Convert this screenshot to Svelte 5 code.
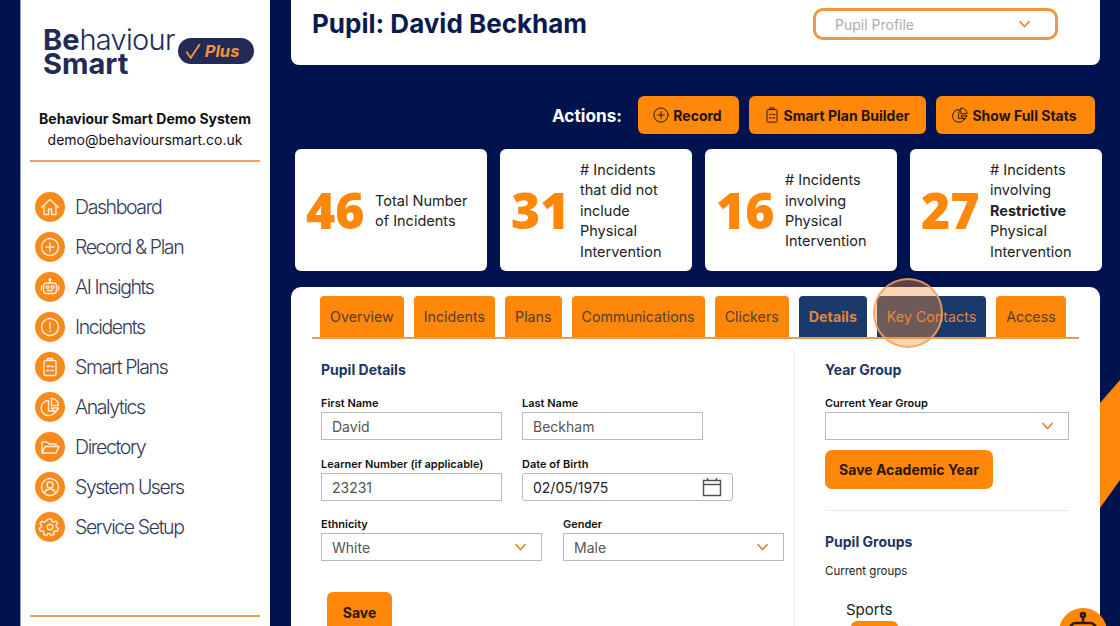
<script>
	const nav = [
		{ label: 'Dashboard', icon: 'home' },
		{ label: 'Record & Plan', icon: 'plus' },
		{ label: 'AI Insights', icon: 'robot' },
		{ label: 'Incidents', icon: 'alert' },
		{ label: 'Smart Plans', icon: 'clip' },
		{ label: 'Analytics', icon: 'pie' },
		{ label: 'Directory', icon: 'folder' },
		{ label: 'System Users', icon: 'user' },
		{ label: 'Service Setup', icon: 'gear' }
	];
	const stats = [
		{ n: 46, lines: ['Total Number', 'of Incidents'] },
		{ n: 31, lines: ['# Incidents', 'that did not', 'include', 'Physical', 'Intervention'] },
		{ n: 16, lines: ['# Incidents', 'involving', 'Physical', 'Intervention'] },
		{ n: 27, lines: ['# Incidents', 'involving', '*Restrictive', 'Physical', 'Intervention'] }
	];
	const tabs = ['Overview', 'Incidents', 'Plans', 'Communications', 'Clickers', 'Details', 'Key Contacts', 'Access'];
</script>

{#snippet icon(name)}
	{#if name === 'home'}
		<path d="M3.500 12.500 12 4.500l8.500 8M6 10.500V19.500h4.500v-5.500h3v5.500H18v-9" />
	{:else if name === 'plus'}
		<circle cx="12" cy="12" r="8.500" /><path d="M12 8v8M8 12h8" />
	{:else if name === 'robot'}
		<rect x="5.500" y="8" width="13" height="10.500" rx="3" /><circle cx="9.500" cy="12" r="1.400" /><circle cx="14.500" cy="12" r="1.400" /><path d="M9.500 15.500h5M12 8V5M3.500 11v4M20.500 11v4" /><circle cx="12" cy="4.500" r=".8" />
	{:else if name === 'alert'}
		<circle cx="12" cy="12" r="8.500" /><path d="M12 7.500v6M12 16v.6" />
	{:else if name === 'clip'}
		<rect x="6" y="5.500" width="12" height="15" rx="1.500" /><path d="M9.500 5.500V3.500h5v2M9 11l1 1 1.500-1.500M13 11.500h2.500M9 15.500h2M13 15.500h2.500" />
	{:else if name === 'pie'}
		<path d="M10.500 5.500a7.500 7.500 0 1 0 7 10.500h-7zM13.500 3.500a7 7 0 0 1 7 7h-7zM13.500 13h7l-3 4.500z" />
	{:else if name === 'folder'}
		<path d="M4 18V7h5l2 2h7v2.500M4 18l3-6.500h14L18 18z" />
	{:else if name === 'user'}
		<circle cx="12" cy="12" r="8.500" /><circle cx="12" cy="10" r="3" /><path d="M6.500 18c1-3 3-4 5.500-4s4.500 1 5.500 4" />
	{:else if name === 'gear'}
		<circle cx="12" cy="12" r="2.800" /><path d="M10.500 4h3l.5 2.400 1.700.8 2.200-1.100 1.800 2.500-1.600 1.700.2 1.700 2 1.300-1 2.900-2.400-.2-1.200 1.300.2 2.400-2.900.9-1.300-2h-1.800l-1.300 2-2.900-.9.200-2.400-1.200-1.300-2.400.2-1-2.900 2-1.300.2-1.700-1.600-1.700 1.800-2.500 2.200 1.100 1.700-.8z" />
	{/if}
{/snippet}

{#snippet chevron()}
	<svg class="chev" viewBox="0 0 12 8" width="13" height="8"><path d="M1 1.200 6 6.500l5-5.300" /></svg>
{/snippet}

<div class="page">
	<div class="bg-shape"></div>

	<aside class="sidebar">
		<div class="logo">
			<div class="wordmark">
				<div><b>Be</b>haviour</div>
				<div><b>Smart</b></div>
			</div>
			<div class="plus">
				<svg viewBox="0 0 16 16" width="18" height="18"><path d="M2 8.500 6 14 14 2" /></svg>
				<span>Plus</span>
			</div>
		</div>
		<div class="org">
			<strong>Behaviour Smart Demo System</strong>
			<span>demo@behavioursmart.co.uk</span>
		</div>
		<nav>
			{#each nav as item}
				<div class="nav-item">
					<div class="nav-icon">
						<svg viewBox="0 0 24 24" width="24" height="24">{@render icon(item.icon)}</svg>
					</div>
					<span>{item.label}</span>
				</div>
			{/each}
		</nav>
		<div class="side-bottom"></div>
	</aside>

	<main>
		<header class="top">
			<h1>Pupil: David Beckham</h1>
			<div class="profile">
				<span>Pupil Profile</span>
				{@render chevron()}
			</div>
		</header>

		<div class="actions">
			<span class="actions-label">Actions:</span>
			<button class="btn w-record"><svg viewBox="0 0 24 24" width="20" height="20">{@render icon('plus')}</svg>Record</button>
			<button class="btn w-plan"><svg viewBox="0 0 24 24" width="20" height="20">{@render icon('clip')}</svg>Smart Plan Builder</button>
			<button class="btn w-stats"><svg viewBox="0 0 24 24" width="20" height="20">{@render icon('pie')}</svg>Show Full Stats</button>
		</div>

		<section class="stats">
			{#each stats as s}
				<div class="stat">
					<div class="num">{s.n}</div>
					<div class="desc">
						{#each s.lines as line}
							{#if line.startsWith('*')}
								<div><b>{line.slice(1)}</b></div>
							{:else}
								<div>{line}</div>
							{/if}
						{/each}
					</div>
				</div>
			{/each}
		</section>

		<section class="panel">
			<div class="tabs">
				{#each tabs as t}
					<div class="tab" class:dark={t === 'Details' || t === 'Key Contacts'} class:on={t === 'Details'}>{t}</div>
				{/each}
				<div class="click-ring"></div>
			</div>

			<div class="columns">
				<div class="left">
					<h3>Pupil Details</h3>
					<div class="row first">
						<div class="field w181"><label>First Name</label><div class="input">David</div></div>
						<div class="field w181"><label>Last Name</label><div class="input">Beckham</div></div>
					</div>
					<div class="row">
						<div class="field w181"><label>Learner Number (if applicable)</label><div class="input">23231</div></div>
						<div class="field w211">
							<label>Date of Birth</label>
							<div class="input date">
								<span>02/05/1975</span>
								<svg viewBox="0 0 20 20" width="20" height="20"><path d="M1.500 3.500h17v15h-17zM1.500 7.500h17M5.500 1v3M14.500 1v3" /></svg>
							</div>
						</div>
					</div>
					<div class="row last">
						<div class="field w221"><label>Ethnicity</label><div class="input select"><span>White</span>{@render chevron()}</div></div>
						<div class="field w221"><label>Gender</label><div class="input select"><span>Male</span>{@render chevron()}</div></div>
					</div>
					<button class="save">Save</button>
				</div>

				<div class="right">
					<h3>Year Group</h3>
					<div class="field year">
						<label>Current Year Group</label>
						<div class="input select"><span></span>{@render chevron()}</div>
					</div>
					<button class="save-year">Save Academic Year</button>
					<hr />
					<h3>Pupil Groups</h3>
					<p class="current">Current groups</p>
					<div class="group">Sports</div>
					<div class="chip"></div>
				</div>
			</div>
		</section>
	</main>

	<div class="bot">
		<svg viewBox="0 0 48 48" width="48" height="48"><rect x="11" y="15" width="26" height="20" rx="6" /><path d="M24 15V9M7 21v8M41 21v8" /><circle cx="24" cy="7" r="2" /></svg>
	</div>
</div>

<style>
	:global(body) {
		margin: 0;
		background: #00134f;
	}

	.page {
		position: relative;
		display: flex;
		height: 626px;
		overflow: hidden;
		background: #00134f;
		font-family: Inter, "Liberation Sans", sans-serif;
		color: #1b1b1b;
	}

	.bg-shape {
		position: absolute;
		right: 0;
		top: 380px;
		width: 20px;
		height: 128px;
		background: #ff8709;
		clip-path: polygon(0 23px, 100% 0, 100% 100px, 0 100%);
	}

	/* sidebar */
	.sidebar {
		width: 250px;
		margin-left: 20px;
		flex: none;
		background: #fff;
		display: flex;
		flex-direction: column;
		border-left: 1px solid #8fa0bd;
		box-sizing: border-box;
	}

	.logo {
		display: flex;
		align-items: center;
		padding: 26px 0 0 22px;
		height: 52px;
	}

	.wordmark {
		font-size: 29px;
		line-height: 24px;
		font-weight: 300;
		color: #232a55;
		letter-spacing: -0.7px;
	}

	.wordmark b {
		font-weight: 700;
		letter-spacing: 0;
	}

	.plus {
		display: flex;
		align-items: center;
		gap: 3px;
		width: 76px;
		height: 26px;
		margin-left: 3px;
		margin-top: -2px;
		padding-left: 6px;
		box-sizing: border-box;
		border-radius: 13px;
		background: #232a55;
		color: #f5923a;
		font-size: 16.500px;
		font-weight: 700;
		font-style: italic;
	}

	.plus svg path {
		fill: none;
		stroke: #f5923a;
		stroke-width: 1.700;
	}

	.org {
		margin: 32px 10px 0 9px;
		padding-bottom: 11px;
		border-bottom: 2px solid #eea25c;
		display: flex;
		flex-direction: column;
		align-items: center;
		gap: 3px;
		font-size: 14px;
		line-height: 18px;
		color: #111;
	}

	.org strong {
		font-weight: 700;
	}

	nav {
		margin-top: 30px;
		padding-left: 14px;
		display: flex;
		flex-direction: column;
		gap: 10px;
	}

	.nav-item {
		display: flex;
		align-items: center;
		gap: 10px;
		height: 30px;
		font-size: 19.500px;
		font-weight: 300;
		letter-spacing: -1.400px;
		color: #35395a;
	}

	.nav-icon {
		width: 30px;
		height: 30px;
		border-radius: 50%;
		background: #f78a1c;
		display: flex;
		align-items: center;
		justify-content: center;
	}

	.nav-icon svg {
		fill: none;
		stroke: #ffeede;
		stroke-width: 1.400;
		stroke-linecap: round;
		stroke-linejoin: round;
	}

	.side-bottom {
		margin: auto 10px 9px 9px;
		border-top: 2px solid #dfa35f;
	}

	/* main column */
	main {
		width: 809px;
		margin-left: 21px;
		flex: none;
		position: relative;
	}

	.top {
		height: 65px;
		background: #fff;
		border-radius: 0 0 8px 8px;
		display: flex;
		align-items: center;
		justify-content: space-between;
		padding: 0 42px 17px 21px;
		box-sizing: border-box;
	}

	h1 {
		margin: 0;
		font-size: 26px;
		line-height: 48px;
		font-weight: 700;
		color: #0a1a50;
	}

	.profile {
		width: 245px;
		height: 32px;
		box-sizing: border-box;
		border: 3px solid #f0983f;
		border-radius: 10px;
		padding: 0 24px 0 19px;
		display: flex;
		align-items: center;
		justify-content: space-between;
		font-size: 14px;
		color: #adadad;
	}

	.chev {
		flex: none;
		fill: none;
		stroke: #e9883a;
		stroke-width: 1.800;
	}

	.actions {
		display: flex;
		align-items: center;
		margin: 31px 5px 0 0;
		height: 38px;
		justify-content: flex-end;
		gap: 10px;
	}

	.actions-label {
		color: #fff;
		font-size: 17.200px;
		font-weight: 700;
		margin-right: 6px;
	}

	.btn {
		height: 38px;
		box-sizing: border-box;
		border: 0;
		border-radius: 6px;
		background: #ff8709;
		color: #231507;
		font: 700 14px Inter, "Liberation Sans", sans-serif;
		display: flex;
		align-items: center;
		justify-content: center;
		gap: 2px;
		padding: 0 4px 0 0;
	}

	.btn svg {
		fill: none;
		stroke: #2b1a08;
		stroke-width: 1.200;
		stroke-linecap: round;
		stroke-linejoin: round;
	}

	.w-record { width: 101px; }
	.w-plan { width: 177px; }
	.w-stats { width: 159px; }

	.stats {
		display: grid;
		grid-template-columns: repeat(4, 192px);
		column-gap: 13px;
		margin: 15px 0 0 4px;
		width: 807px;
	}

	.stat {
		height: 122px;
		background: #fff;
		border-radius: 6px;
		display: flex;
		align-items: center;
		padding-left: 11px;
		box-sizing: border-box;
	}

	.num {
		font-family: "Open Sans", Inter, sans-serif;
		font-size: 50px;
		font-weight: 800;
		color: #ff8709;
		width: 69px;
		flex: none;
	}

	.desc {
		font-size: 14.500px;
		line-height: 20.400px;
		color: #222;
		padding-top: 2px;
	}

	.panel {
		margin-top: 16px;
		height: 400px;
		background: #fff;
		border-radius: 10px;
	}

	.tabs {
		position: relative;
		margin: 0 21px 0 21px;
		padding: 9px 0 0 8px;
		display: flex;
		gap: 10px;
		border-bottom: 2px solid #ec9c4e;
		height: 41px;
	}

	.tab {
		padding: 0 10px;
		display: flex;
		align-items: center;
		background: #ff8709;
		color: #51402f;
		font-size: 14.250px;
		border-radius: 4px 4px 0 0;
		height: 41px;
	}

	.tab.dark {
		background: #1a3a6b;
		color: #e0863a;
	}

	.tab.on {
		font-weight: 700;
	}

	.click-ring {
		position: absolute;
		left: 561px;
		top: -9px;
		width: 66px;
		height: 66px;
		border-radius: 50%;
		background: rgba(247, 145, 60, 0.38);
		border: 2px solid rgba(247, 160, 90, 0.85);
	}

	.columns {
		display: flex;
		margin-top: 11px;
	}

	.left {
		width: 503px;
		padding: 0 0 0 30px;
		box-sizing: border-box;
		flex: none;
	}

	.right {
		margin-left: 0;
		padding-left: 30px;
		border-left: 1px solid #ececec;
		flex: none;
		width: 244px;
	}

	h3 {
		margin: 0;
		padding-top: 11px;
		font-size: 14px;
		line-height: 18px;
		font-weight: 700;
		color: #1c3564;
	}

	.row {
		display: flex;
		gap: 20px;
		margin-top: 17px;
	}

	.row.first {
		margin-top: 17px;
	}

	.row.last {
		margin-top: 16px;
		gap: 21px;
	}

	.field label {
		display: block;
		font-size: 11px;
		line-height: 14px;
		font-weight: 600;
		color: #111;
		margin-bottom: 2px;
	}

	.w181 { width: 181px; }
	.w211 { width: 211px; }
	.w221 { width: 221px; }

	.input {
		height: 28px;
		box-sizing: border-box;
		border: 1px solid #b8b8b8;
		padding: 0 10px;
		display: flex;
		align-items: center;
		font-size: 14px;
		color: #555;
		background: #fff;
	}

	.select {
		justify-content: space-between;
		padding-right: 14px;
	}

	.date {
		justify-content: space-between;
		border-radius: 3px;
		color: #222;
	}

	.date svg {
		fill: none;
		stroke: #555;
		stroke-width: 1.500;
		flex: none;
	}

	.save {
		display: block;
		margin: 31px 0 0 6px;
		width: 65px;
		height: 40px;
		border: 0;
		border-radius: 6px;
		background: #ff8709;
		font: 700 14px Inter, "Liberation Sans", sans-serif;
		color: #2a1706;
	}

	.year {
		margin-top: 17px;
	}

	.save-year {
		display: block;
		margin-top: 10px;
		width: 168px;
		height: 39px;
		border: 0;
		border-radius: 7px;
		background: #ff8709;
		font: 700 14px Inter, "Liberation Sans", sans-serif;
		color: #2a1706;
	}

	hr {
		border: 0;
		border-top: 1px solid #ececec;
		margin: 21px 0 11px;
	}

	.current {
		margin: 13px 0 0;
		font-size: 11.500px;
		line-height: 14px;
		color: #222;
	}

	.group {
		margin: 23px 0 0 21px;
		font-size: 15px;
		line-height: 18px;
		color: #222;
	}

	.chip {
		margin: 2px 0 0 26px;
		width: 47px;
		height: 20px;
		background: #ff8709;
		border-radius: 6px 6px 0 0;
	}

	.bot {
		position: absolute;
		left: 1059px;
		top: 608px;
		width: 48px;
		height: 48px;
		border-radius: 50%;
		background: #ff8709;
	}

	.bot svg {
		fill: none;
		stroke: #2a1a10;
		stroke-width: 2.500;
	}
</style>
